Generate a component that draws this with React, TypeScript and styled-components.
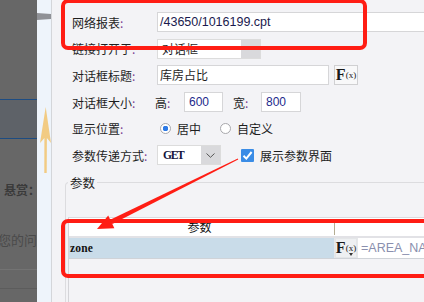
import React from 'react';
import styled, { createGlobalStyle } from 'styled-components';

const Global = createGlobalStyle`
  html, body { margin: 0; padding: 0; }
  body {
    width: 424px; height: 302px; overflow: hidden;
    font-family: "Noto Sans CJK SC", "Liberation Sans", sans-serif;
  }
`;

const Screen = styled.div`
  position: relative;
  display: flex;
  width: 424px;
  height: 302px;
  overflow: hidden;
`;

/* ---------- dimmed page behind the dialog ---------- */
const Backdrop = styled.div`
  width: 37px;
  flex: none;
  background: #676767;
  display: flex;
  flex-direction: column;
  overflow: hidden;
`;
const BackSpacer = styled.div<{ $h: number }>`
  height: ${p => p.$h}px;
  flex: none;
`;
const BlueBand = styled.div`
  height: 38px;
  flex: none;
  background: #5e6268;
  border-top: 1px solid #1d4c82;
  border-bottom: 1px solid #1d4c82;
`;
const BountyText = styled.div`
  margin-top: 43px;
  padding-left: 4px;
  height: 16px;
  line-height: 16px;
  font-size: 12px;
  font-weight: 700;
  color: #3a3a3a;
  white-space: nowrap;
`;
const QuestionText = styled.div`
  margin-top: 34px;
  margin-left: -2px;
  height: 16px;
  line-height: 16px;
  font-size: 13px;
  color: #4a4a4a;
  white-space: nowrap;
`;
const BackDivider = styled.div`
  margin-top: 21px;
  height: 18px;
  border-top: 1px solid #737373;
  border-bottom: 1px solid #5c5c5c;
`;

/* ---------- light strip ---------- */
const Strip = styled.div`
  width: 14px;
  flex: none;
  background: #eef4fb;
  border-right: 1px solid #d4d6da;
  display: flex;
  flex-direction: column;
`;
const StripBar = styled.div`
  margin-top: 13px;
  height: 7px;
  background: #8f9196;
  clip-path: polygon(0 0, 100% 15%, 100% 85%, 0 100%);
`;
const StripArrow = styled.svg`
  margin-top: 87px;
  display: block;
`;

/* ---------- dialog ---------- */
const Dialog = styled.div`
  flex: 1;
  min-width: 0;
  background: #f3f3f6;
  overflow: hidden;
  display: flex;
  flex-direction: column;
`;
const Form = styled.div`
  display: flex;
  flex-direction: column;
  padding: 9px 0 0 20px;
`;
const Row = styled.div`
  display: flex;
  align-items: center;
  height: 26.6px;
  flex: none;
  font-size: 12px;
  color: #1e1e1e;
  white-space: nowrap;
`;
const Label = styled.div`
  width: 85px;
  flex: none;
`;
const Colon = styled.span`
  color: #7a3d92;
`;
const Field = styled.div<{ $w: number; $kind?: 'path' | 'num' | 'text' }>`
  box-sizing: border-box;
  width: ${p => p.$w}px;
  height: 20px;
  flex: none;
  background: #fff;
  border: 1px solid #d6d6d8;
  padding-left: ${p => (p.$kind === 'num' ? 4 : 2)}px;
  line-height: 18px;
  overflow: hidden;
  white-space: nowrap;
  font-size: ${p => (p.$kind === 'path' ? 12.5 : 12)}px;
  font-family: ${p =>
    p.$kind === 'text'
      ? '"Noto Sans CJK SC", sans-serif'
      : '"Liberation Sans", Arial, sans-serif'};
  color: ${p => (p.$kind === 'num' ? '#1d2a8c' : p.$kind === 'path' ? '#1a1a4e' : '#1e1e1e')};
`;
const SelectBox = styled.div<{ $w: number }>`
  box-sizing: border-box;
  width: ${p => p.$w}px;
  height: 20px;
  flex: none;
  display: flex;
  background: #fff;
  border: 1px solid #dcdcdc;
`;
const SelectText = styled.div<{ $mono?: boolean }>`
  flex: 1;
  padding-left: ${p => (p.$mono ? 5 : 4)}px;
  line-height: 18px;
  font-size: ${p => (p.$mono ? 11.5 : 12)}px;
  font-family: ${p =>
    p.$mono ? '"Liberation Serif", serif' : '"Noto Sans CJK SC", sans-serif'};
  font-weight: ${p => (p.$mono ? 700 : 400)};
  letter-spacing: ${p => (p.$mono ? '-1.3px' : '0')};
  color: ${p => (p.$mono ? '#14143c' : '#1e1e1e')};
`;
const SelectButton = styled.div<{ $w: number }>`
  width: ${p => p.$w}px;
  flex: none;
  background: #d9d9dc;
  display: flex;
  align-items: center;
  justify-content: center;
`;
const FxButton = styled.div<{ $drop?: boolean }>`
  position: relative;
  box-sizing: border-box;
  width: ${p => (p.$drop ? 22 : 24)}px;
  height: 20px;
  flex: none;
  margin-left: ${p => (p.$drop ? 0 : 5)}px;
  background: ${p => (p.$drop ? '#eef0f2' : '#f8f8f9')};
  border: 1px solid ${p => (p.$drop ? '#e4e6e8' : '#d0d0d2')};
  display: flex;
  align-items: flex-start;
  justify-content: center;
  padding-top: 1px;
  font-family: "Liberation Serif", "DejaVu Serif", serif;
  color: #1a1a1a;
  line-height: 1;
`;
const FxF = styled.span`
  font-size: 16px;
  font-weight: 700;
`;
const FxX = styled.span`
  font-size: 9px;
  margin-top: 4px;
`;
const DropMark = styled.span`
  position: absolute;
  right: 3px;
  bottom: 1px;
  width: 0;
  height: 0;
  border-left: 2.5px solid transparent;
  border-right: 2.5px solid transparent;
  border-top: 3px solid #333;
`;
const SubLabel = styled.span<{ $ml: number; $w: number }>`
  margin-left: ${p => p.$ml}px;
  width: ${p => p.$w}px;
  flex: none;
`;
const Radio = styled.span<{ $on?: boolean; $ml: number }>`
  box-sizing: border-box;
  margin-left: ${p => p.$ml}px;
  width: 11px;
  height: 11px;
  flex: none;
  border-radius: 50%;
  border: 1px solid #a8a8ac;
  background: ${p =>
    p.$on ? 'radial-gradient(circle, #2f7be6 0 2.6px, #fff 3px)' : '#fff'};
`;
const OptionText = styled.span`
  margin-left: 6px;
`;
const Check = styled.span`
  margin-left: 20px;
  width: 13px;
  height: 13px;
  flex: none;
  border-radius: 1px;
  background: #3a8ce6;
  display: flex;
  align-items: center;
  justify-content: center;
`;

/* ---------- params fieldset ---------- */
const ParamSet = styled.fieldset`
  box-sizing: border-box;
  margin: 6.4px 0 0 13px;
  width: 380px;
  flex: 1;
  min-height: 0;
  border: 1px solid #dcdcdf;
  border-bottom: none;
  border-radius: 4px 4px 0 0;
  padding: 0 0 0 2px;
  display: flex;
  flex-direction: column;
`;
const ParamLegend = styled.legend`
  padding: 0 2px;
  font-size: 12.5px;
  line-height: 16px;
  color: #1e1e1e;
`;
const Table = styled.div`
  margin-top: 26px;
  flex: 1;
  border-top: 1px solid #dadade;
  border-left: 1px solid #d4d4d8;
  display: flex;
  flex-direction: column;
`;
const HeadRow = styled.div`
  display: grid;
  grid-template-columns: 265px 1fr;
  height: 18px;
  background: #fff;
  border-bottom: 2px solid #e2e2e6;
`;
const HeadCell = styled.div<{ $sep?: boolean }>`
  font-size: 12px;
  line-height: 18px;
  text-align: center;
  padding-right: 4px;
  color: #111;
  ${p => (p.$sep ? 'border-left: 1px solid #b5ad92; margin: 4px 0 1px;' : '')}
`;
const DataRow = styled.div`
  display: grid;
  grid-template-columns: 265px 1fr;
  height: 20px;
  border-bottom: 1px solid #cfd3d8;
`;
const NameCell = styled.div`
  background: #c9dce9;
  padding-left: 1px;
  line-height: 20px;
  font-family: "Liberation Serif", "Courier New", serif;
  font-size: 11.5px;
  font-weight: 700;
  letter-spacing: 0.2px;
  color: #111;
`;
const ValueCell = styled.div`
  display: flex;
  padding-left: 1px;
  background: #e6e8ea;
`;
const ValueInput = styled.div`
  flex: 1;
  margin-left: 1px;
  background: #fff;
  padding-left: 3px;
  line-height: 20px;
  font-family: "Liberation Sans", Arial, sans-serif;
  font-size: 12.5px;
  color: #8a8fae;
  white-space: nowrap;
  overflow: hidden;
`;

/* ---------- red annotations (over content) ---------- */
const Mark = styled.div<{ $l: number; $t: number; $w: number; $h: number }>`
  position: absolute;
  box-sizing: border-box;
  left: ${p => p.$l}px;
  top: ${p => p.$t}px;
  width: ${p => p.$w}px;
  height: ${p => p.$h}px;
  border: 4.5px solid #ff1d14;
  border-radius: 7px;
  pointer-events: none;
`;
const Overlay = styled.svg`
  position: absolute;
  left: 0;
  top: 0;
  pointer-events: none;
`;

const Fx: React.FC<{ drop?: boolean }> = ({ drop }) => (
  <FxButton $drop={drop}>
    <FxF>F</FxF>
    <FxX>(x)</FxX>
    {drop && <DropMark />}
  </FxButton>
);

export default function App() {
  return (
    <>
      <Global />
      <Screen>
        <Backdrop>
          <BackSpacer $h={99} />
          <BlueBand />
          <BountyText>悬赏：</BountyText>
          <QuestionText>您的问</QuestionText>
          <BackDivider />
        </Backdrop>

        <Strip>
          <StripBar />
          <StripArrow width="14" height="67" viewBox="0 0 14 67">
            <path
              d="M8.7 0 L14 36 L9.9 31 L9.7 66 L7.3 66 L7.4 31 L3 36 Z"
              fill="#f2c676"
              opacity="0.9"
            />
          </StripArrow>
        </Strip>

        <Dialog>
          <Form>
            <Row>
              <Label>网络报表<Colon>:</Colon></Label>
              <Field $w={290} $kind="path">/43650/1016199.cpt</Field>
            </Row>
            <Row>
              <Label>链接打开于<Colon>:</Colon></Label>
              <SelectBox $w={104}>
                <SelectText>对话框</SelectText>
                <SelectButton $w={19} />
              </SelectBox>
            </Row>
            <Row>
              <Label>对话框标题<Colon>:</Colon></Label>
              <Field $w={172} $kind="text">库房占比</Field>
              <Fx />
            </Row>
            <Row>
              <Label>对话框大小<Colon>:</Colon></Label>
              <SubLabel $ml={-2} $w={29}>高<Colon>:</Colon></SubLabel>
              <Field $w={39} $kind="num">600</Field>
              <SubLabel $ml={10} $w={28}>宽<Colon>:</Colon></SubLabel>
              <Field $w={40} $kind="num">800</Field>
            </Row>
            <Row>
              <Label>显示位置<Colon>:</Colon></Label>
              <Radio $on $ml={3} />
              <OptionText>居中</OptionText>
              <Radio $ml={19} />
              <OptionText>自定义</OptionText>
            </Row>
            <Row>
              <Label>参数传递方式<Colon>:</Colon></Label>
              <SelectBox $w={64}>
                <SelectText $mono>GET</SelectText>
                <SelectButton $w={19}>
                  <svg width="9" height="5" viewBox="0 0 9 5">
                    <path d="M0.5 0.5 L4.5 4.3 L8.5 0.5" fill="none" stroke="#555" strokeWidth="1" />
                  </svg>
                </SelectButton>
              </SelectBox>
              <Check>
                <svg width="11" height="11" viewBox="0 0 11 11">
                  <path d="M1.5 5.8 L4.3 8.6 L9.6 2" fill="none" stroke="#fff" strokeWidth="2" />
                </svg>
              </Check>
              <OptionText>展示参数界面</OptionText>
            </Row>
          </Form>

          <ParamSet>
            <ParamLegend>参数</ParamLegend>
            <Table>
              <HeadRow>
                <HeadCell>参数</HeadCell>
                <HeadCell $sep />
              </HeadRow>
              <DataRow>
                <NameCell>zone</NameCell>
                <ValueCell>
                  <Fx drop />
                  <ValueInput>=AREA_NAME</ValueInput>
                </ValueCell>
              </DataRow>
            </Table>
          </ParamSet>
        </Dialog>

        <Mark $l={61} $t={-1} $w={306} $h={51} />
        <Mark $l={61} $t={219} $w={400} $h={59} />
        <Overlay width="424" height="302" viewBox="0 0 424 302">
          <polygon
            points="237.8,158.6 238.2,159.4 112.4,224.1 110.2,219.7"
            fill="#ff1d14"
          />
          <polygon points="97,229 108.2,215.6 114.4,228.2" fill="#ff1d14" />
        </Overlay>
      </Screen>
    </>
  );
}
